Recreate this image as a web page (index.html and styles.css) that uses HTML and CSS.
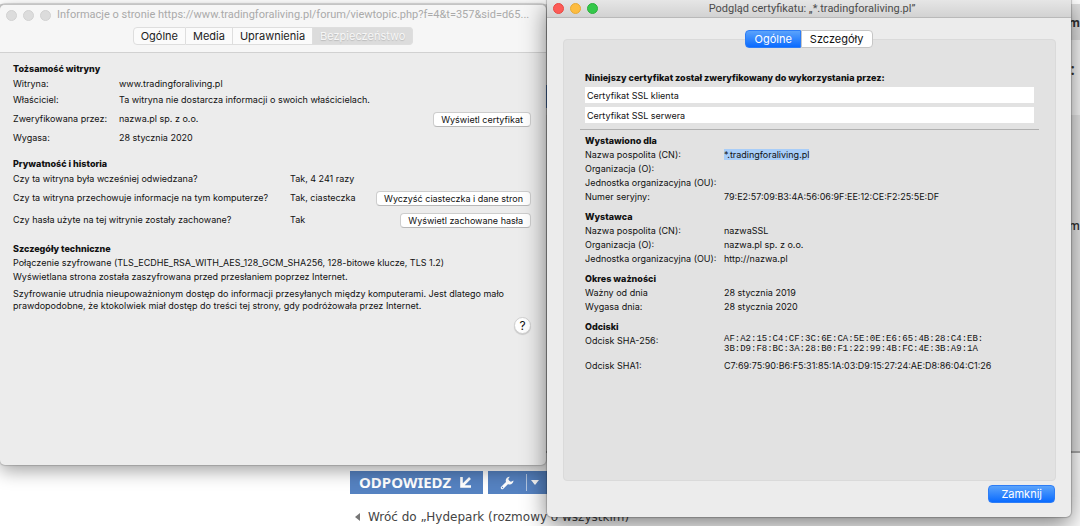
FILE: index.html
```html
<!DOCTYPE html>
<html lang="pl">
<head>
<meta charset="utf-8">
<title>Podgląd certyfikatu</title>
<link rel="stylesheet" href="styles.css">
</head>
<body>
<div class="desktop">
  <div class="forum">
    <div class="forum-band">m</div>
    <div class="forum-head"><span class="forum-chip"></span><span class="forum-colon">:</span></div>
    <div class="forum-post">m</div>
    <div class="forum-foot">
      <div class="forum-actions">
        <button class="forum-button" type="button">ODPOWIEDZ
          <svg width="11" height="11" viewBox="0 0 11 11"><path d="M1.500 0v9.500H11M2 9L10 1" fill="none" stroke="#fff" stroke-width="2.600"/></svg>
        </button>
        <button class="forum-button forum-tools" type="button" aria-label="Narzędzia tematu">
          <svg width="14" height="14" viewBox="0 0 14 14"><path d="M2.300 11.700L8.300 5.700" stroke="#fff" stroke-width="3" stroke-linecap="round"/><path d="M9.800.7a3.900 3.900 0 1 0 3.700 3.800L11 5.700 8.700 4.800 8.400 2.700z" fill="#fff"/><circle cx="2.500" cy="11.500" r=".7" fill="#5582c1"/></svg>
          <span class="tools-line"></span>
          <svg width="8" height="5" viewBox="0 0 8 5"><path d="M0 0h8L4 5z" fill="#fff"/></svg>
        </button>
      </div>
      <a class="forum-back" href="#"><svg width="5" height="8" viewBox="0 0 5 8"><path d="M5 0v8L0 4z" fill="#777"/></svg>Wróć do „Hydepark (rozmowy o wszystkim)</a>
    </div>
  </div>

  <section class="window info">
    <header class="info-top">
      <div class="info-title">
        <span class="light"></span><span class="light"></span><span class="light"></span>
        <h1>Informacje o stronie https://www.tradingforaliving.pl/forum/viewtopic.php?f=4&amp;t=357&amp;sid=d65...</h1>
      </div>
      <nav class="segments">
        <button type="button">Ogólne</button><button type="button">Media</button><button type="button">Uprawnienia</button><button type="button" class="current">Bezpieczeństwo</button>
      </nav>
    </header>
    <div class="info-body">
      <section>
        <h2>Tożsamość witryny</h2>
        <div class="row"><span>Witryna:</span><span>www.tradingforaliving.pl</span></div>
        <div class="row"><span>Właściciel:</span><span>Ta witryna nie dostarcza informacji o swoich właścicielach.</span></div>
        <div class="row tall"><span>Zweryfikowana przez:</span><span>nazwa.pl sp. z o.o.</span><button class="push" type="button">Wyświetl certyfikat</button></div>
        <div class="row"><span>Wygasa:</span><span>28 stycznia 2020</span></div>
      </section>
      <section class="history">
        <h2>Prywatność i historia</h2>
        <div class="row"><span>Czy ta witryna była wcześniej odwiedzana?</span><span>Tak, 4 241 razy</span></div>
        <div class="row tall"><span>Czy ta witryna przechowuje informacje na tym komputerze?</span><span>Tak, ciasteczka</span><button class="push" type="button">Wyczyść ciasteczka i dane stron</button></div>
        <div class="row tall"><span>Czy hasła użyte na tej witrynie zostały zachowane?</span><span>Tak</span><button class="push" type="button">Wyświetl zachowane hasła</button></div>
      </section>
      <section>
        <h2>Szczegóły techniczne</h2>
        <p>Połączenie szyfrowane (TLS_ECDHE_RSA_WITH_AES_128_GCM_SHA256, 128-bitowe klucze, TLS 1.2)</p>
        <p>Wyświetlana strona została zaszyfrowana przed przesłaniem poprzez Internet.</p>
        <p class="note">Szyfrowanie utrudnia nieupoważnionym dostęp do informacji przesyłanych między komputerami. Jest dlatego mało<br>prawdopodobne, że ktokolwiek miał dostęp do treści tej strony, gdy podróżowała przez Internet.</p>
      </section>
      <button class="help" type="button">?</button>
    </div>
  </section>

  <section class="window cert">
    <header class="cert-top">
      <div class="lights"><span class="light red"></span><span class="light yellow"></span><span class="light green"></span></div>
      <h1>Podgląd certyfikatu: „*.tradingforaliving.pl”</h1>
    </header>
    <nav class="tabs">
      <button type="button" class="active">Ogólne</button><button type="button">Szczegóły</button>
    </nav>
    <div class="panel">
      <h2 id="uses">Niniejszy certyfikat został zweryfikowany do wykorzystania przez:</h2>
      <input class="field" type="text" readonly value="Certyfikat SSL klienta" aria-labelledby="uses">
      <input class="field" type="text" readonly value="Certyfikat SSL serwera" aria-labelledby="uses">
      <hr>
      <dl>
        <dt class="group">Wystawiono dla</dt>
        <dt>Nazwa pospolita (CN):</dt><dd><mark>*.tradingforaliving.pl</mark></dd>
        <dt>Organizacja (O):</dt><dd></dd>
        <dt>Jednostka organizacyjna (OU):</dt><dd></dd>
        <dt>Numer seryjny:</dt><dd>79:E2:57:09:B3:4A:56:06:9F:EE:12:CE:F2:25:5E:DF</dd>
        <dt class="group">Wystawca</dt>
        <dt>Nazwa pospolita (CN):</dt><dd>nazwaSSL</dd>
        <dt>Organizacja (O):</dt><dd>nazwa.pl sp. z o.o.</dd>
        <dt>Jednostka organizacyjna (OU):</dt><dd>http://nazwa.pl</dd>
        <dt class="group">Okres ważności</dt>
        <dt>Ważny od dnia</dt><dd>28 stycznia 2019</dd>
        <dt>Wygasa dnia:</dt><dd>28 stycznia 2020</dd>
        <dt class="group">Odciski</dt>
        <dt>Odcisk SHA-256:</dt><dd class="hash">AF:A2:15:C4:CF:3C:6E:CA:5E:0E:E6:65:4B:28:C4:EB:<br>3B:D9:F8:BC:3A:28:B0:F1:22:99:4B:FC:4E:3B:A9:1A</dd>
        <dt class="last">Odcisk SHA1:</dt><dd class="last">C7:69:75:90:B6:F5:31:85:1A:03:D9:15:27:24:AE:D8:86:04:C1:26</dd>
      </dl>
    </div>
    <footer class="cert-foot"><button class="close" type="button">Zamknij</button></footer>
  </section>
</div>
</body>
</html>
```
FILE: styles.css
```css
* { box-sizing: border-box; }

body {
  margin: 0;
  background: #fff;
  color: #111;
  font: 9px/14px Inter, "Liberation Sans", sans-serif;
  overflow: hidden;
}

button, input { font: inherit; color: inherit; margin: 0; }
h1, h2, p, dl, dd { margin: 0; font-size: inherit; }
h1 { font-weight: 400; white-space: nowrap; }
h2, .group { font-weight: 800; color: #111; }

.desktop {
  display: grid;
  grid-template-columns: minmax(0, 547fr) minmax(0, 524fr) 9px;
  min-height: 100vh;
}

/* forum page behind the windows */
.forum {
  grid-area: 1 / 1 / 2 / 4;
  display: flex;
  flex-direction: column;
  padding-top: 4px;
  font-family: "Open Sans", sans-serif;
  color: #333;
}
.forum-band {
  height: 36px;
  background: #e0e0e0;
  font: 700 12px/38px "Open Sans", sans-serif;
  text-align: right;
}
.forum-head {
  display: flex;
  justify-content: space-between;
  height: 75px;
  padding: 0 5px 0 50%;
  background: #f7f7f7;
}
.forum-chip { width: 40px; height: 23px; margin-top: 45px; background: #5582c1; }
.forum-colon { font: 600 16px/58px "Open Sans", sans-serif; }
.forum-post {
  flex: 1;
  padding-top: 102px;
  background: #e6e6e6;
  border-bottom: 2px solid #aaa;
  font: 600 12px/18px "Open Sans", sans-serif;
  text-align: right;
}
.forum-foot { height: 73px; padding: 18px 0 0 350px; }
.forum-actions { display: flex; gap: 5px; }
.forum-button {
  display: flex;
  align-items: center;
  gap: 9px;
  height: 23px;
  padding: 0 12px 0 9px;
  border: 0;
  background: #5582c1;
  color: #fff;
  font: 700 15px/23px "Noto Sans", sans-serif;
}
.forum-tools { padding: 0 12px; }
.tools-line { width: 1px; height: 17px; margin-left: 3px; margin-right: -5px; background: #b5c8e4; }
.forum-back {
  display: flex;
  align-items: center;
  gap: 8px;
  margin: 13px 0 0 5px;
  color: #444;
  font: 12px/20px "DejaVu Sans", sans-serif;
  text-decoration: none;
}

/* windows */
.window { display: flex; flex-direction: column; background: #ececec; }
.light { width: 11px; height: 11px; border-radius: 50%; background: #dcdcdc; border: 1px solid #d2d2d2; }

.info {
  grid-area: 1 / 1;
  margin: 4px 1px 61px 0;
  border-top: 1px solid #c4c4c4;
  border-radius: 5px;
  box-shadow: 0 0 1px 1px rgba(0, 0, 0, .15), 0 6px 18px rgba(0, 0, 0, .36);
  z-index: 1;
}
.info-top {
  display: flex;
  flex-direction: column;
  gap: 3px;
  padding: 1px 0 7px;
  background: #f6f6f6;
  border-bottom: 1px solid #d1d1d1;
  border-radius: 5px 5px 0 0;
}
.info-title { display: flex; align-items: center; gap: 6px; height: 18px; padding: 0 6px; }
.info-title h1 { color: #aaa; font: 11px/14px Roboto, sans-serif; }

.segments { display: flex; justify-content: center; }
.segments button {
  height: 18px;
  padding: 0 7px;
  border: 1px solid #dedede;
  border-left-width: 0;
  background: #fbfbfb;
  color: #222;
  font-size: 11px;
  line-height: 16px;
}
.segments button:first-child { border-left-width: 1px; border-radius: 4px 0 0 4px; }
.segments .current {
  border-radius: 0 4px 4px 0;
  background: #dcdcdc;
  color: #f6f6f6;
  text-shadow: 0 1px 1px #bbb;
}

.info-body { flex: 1; display: flex; flex-direction: column; gap: 11px; padding: 9px 15px 0 13px; }
.row { display: grid; grid-template-columns: 106px 1fr auto; align-items: center; height: 16px; }
.history .row { grid-template-columns: 277px 1fr auto; }
.row.tall { height: 22px; }
.row span { white-space: nowrap; }
.note { margin-top: 4px; line-height: 12px; white-space: nowrap; }
.push {
  height: 15px;
  padding: 0 7px;
  border: 1px solid #cdcdcd;
  border-bottom-color: #b8b8b8;
  border-radius: 4px;
  background: #fff;
  line-height: 13px;
}
.help {
  align-self: flex-end;
  width: 17px;
  height: 17px;
  margin-top: -6px;
  padding: 0;
  border: 1px solid #d0d0d0;
  border-radius: 50%;
  background: #fff;
  font-size: 12px;
  line-height: 15px;
  box-shadow: 0 1px 1px rgba(0, 0, 0, .15);
}

.cert {
  grid-area: 1 / 2;
  margin-bottom: 9px;
  border-radius: 0 0 5px 5px;
  box-shadow: 0 0 1px 1px rgba(0, 0, 0, .2), 0 8px 24px rgba(0, 0, 0, .5);
  z-index: 2;
}
.cert-top {
  display: grid;
  grid-template-columns: 1fr auto 1fr;
  align-items: center;
  height: 18px;
  padding-left: 6px;
  background: linear-gradient(#e6e6e6, #d2d2d2);
  border-bottom: 1px solid #b9b9b9;
}
.cert-top h1 { color: #4c4c4c; font: 11px/14px Roboto, sans-serif; }
.lights { display: flex; gap: 6px; }
.red { background: #fc5b57; border-color: #e94943; }
.yellow { background: #fdbc40; border-color: #e6a935; }
.green { background: #34c84a; border-color: #2ab03c; }

.tabs { display: flex; justify-content: center; margin: 12px 0 -9px; z-index: 1; }
.tabs button {
  height: 18px;
  padding: 0 8px;
  border: 1px solid #c6c6c6;
  border-radius: 0 4px 4px 0;
  background: #fff;
  font-size: 11px;
  line-height: 16px;
}
.tabs .active {
  border-color: #2d7df6;
  border-radius: 4px 0 0 4px;
  background: linear-gradient(#5ba3fb, #0a6bff);
  color: #fff;
}

.panel {
  flex: 1;
  display: flex;
  flex-direction: column;
  margin: 0 15px 0 16px;
  padding: 31px 21px 0;
  border: 1px solid #dadada;
  border-radius: 4px;
  background: #e2e2e2;
}
.field { width: 100%; height: 16px; margin: 2px 0; padding: 0 2px; border: 0; background: #fff; }
hr { width: auto; margin: 4px -5px; border: 0; border-top: 1px solid #b0b0b0; align-self: stretch; }
dl { display: grid; grid-template-columns: 139px 1fr; grid-auto-rows: minmax(14px, auto); }
.group { grid-column: 1 / 3; margin-top: 6px; }
.group:first-child { margin-top: 0; }
.last { margin-top: 5px; }
dd { white-space: nowrap; }
mark { background: #a8cdf8; color: inherit; }
.hash { font: 9px/10px "Liberation Mono", monospace; }

.cert-foot { display: flex; justify-content: flex-end; padding: 4px 16px 14px; }
.close {
  height: 18px;
  padding: 0 12px;
  border: 1px solid #2d7df6;
  border-radius: 4px;
  background: linear-gradient(#5ba3fb, #0a6bff);
  color: #fff;
  font-size: 11px;
  line-height: 16px;
}
```
